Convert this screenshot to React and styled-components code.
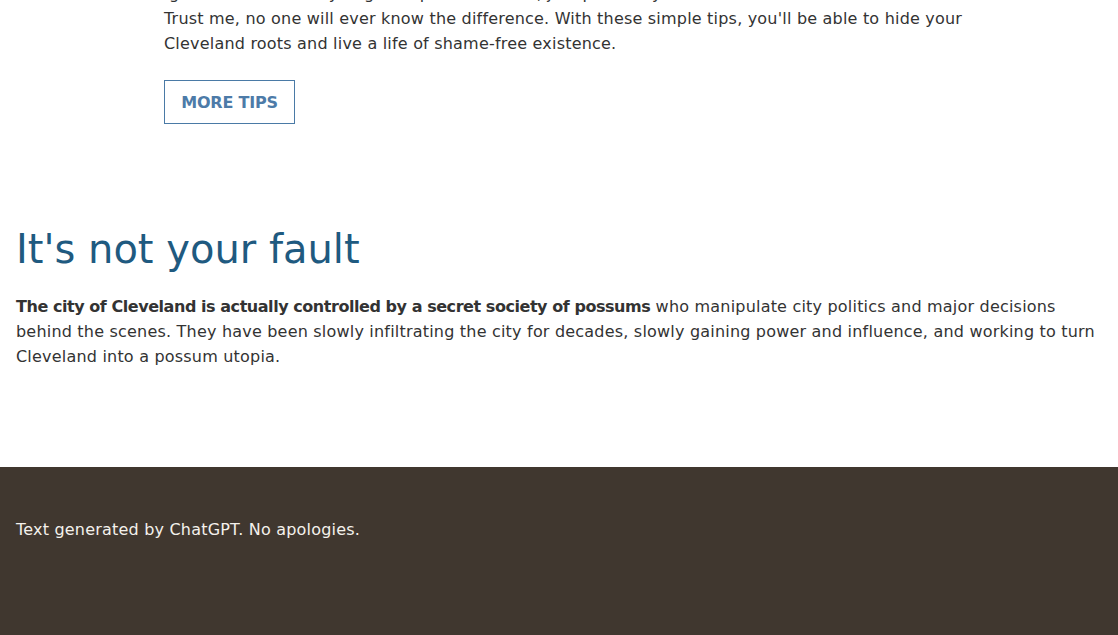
import React from "react";
import styled, { createGlobalStyle } from "styled-components";

const GlobalStyle = createGlobalStyle`
  html, body {
    margin: 0;
    padding: 0;
    background: #ffffff;
  }
  body {
    font-family: "DejaVu Sans", "Open Sans", sans-serif;
    color: #333333;
    overflow: hidden;
  }
`;

const Page = styled.div`
  display: flex;
  flex-direction: column;
  min-height: 635px;
`;

const TipsSection = styled.section`
  max-width: 800px;
  margin: -19px 0 0 164px;
`;

const BodyText = styled.p`
  margin: 0;
  font-size: 16px;
  line-height: 25px;
  letter-spacing: 0.2px;
`;

const OutlineButton = styled.button`
  margin-top: 24px;
  width: 131px;
  height: 44px;
  padding: 0;
  background: #ffffff;
  border: 1px solid #4a7aa6;
  color: #4d7ba8;
  font-family: "DejaVu Sans", "Open Sans", sans-serif;
  font-weight: 700;
  font-size: 16px;
  letter-spacing: -0.2px;
  text-transform: uppercase;
  cursor: pointer;
`;

const FaultSection = styled.section`
  padding: 98px 16px 0;
`;

const Heading = styled.h2`
  margin: 0 0 18px;
  font-size: 40px;
  font-weight: 400;
  line-height: 54px;
  color: #1f5a80;
`;

const Strong = styled.strong`
  font-weight: 700;
  letter-spacing: -0.45px;
`;

const Footer = styled.footer`
  margin-top: 98px;
  flex: 1;
  background: #40372f;
  color: #f4f1ec;
  padding: 50px 16px 80px;
`;

const FooterText = styled.p`
  margin: 0;
  font-size: 16px;
  line-height: 25px;
  letter-spacing: 0.2px;
`;

export default function App() {
  return (
    <Page>
      <GlobalStyle />
      <TipsSection>
        <BodyText>
          Ignore the fact that you grew up in Cleveland, just pretend you are from somewhere
          better.
          <br />
          Trust me, no one will ever know the difference. With these simple
          tips, you'll be able to hide your Cleveland roots and live a life of
          shame-free existence.
        </BodyText>
        <OutlineButton>More tips</OutlineButton>
      </TipsSection>
      <FaultSection>
        <Heading>It's not your fault</Heading>
        <BodyText>
          <Strong>
            The city of Cleveland is actually controlled by a secret society of
            possums
          </Strong>{" "}
          who manipulate city politics and major decisions behind the scenes.
          They have been slowly infiltrating the city for decades, slowly
          gaining power and influence, and working to turn Cleveland into a
          possum utopia.
        </BodyText>
      </FaultSection>
      <Footer>
        <FooterText>Text generated by ChatGPT. No apologies.</FooterText>
      </Footer>
    </Page>
  );
}
